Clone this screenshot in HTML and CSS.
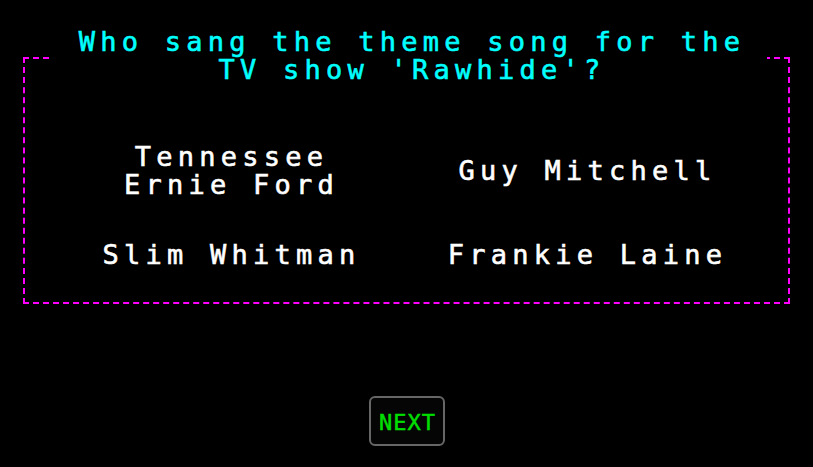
FILE: index.html
```html
<!DOCTYPE html>
<html lang="en">
<head>
<meta charset="utf-8">
<title>Quiz</title>
<link rel="stylesheet" href="styles.css">
</head>
<body>
<main class="page">
  <fieldset class="quiz">
    <legend class="question">Who sang the theme song for the TV show 'Rawhide'?</legend>
    <div class="answers">
      <div class="answer">Tennessee Ernie Ford</div>
      <div class="answer">Guy Mitchell</div>
      <div class="answer">Slim Whitman</div>
      <div class="answer">Frankie Laine</div>
    </div>
  </fieldset>
  <div class="actions">
    <button class="next" type="button">NEXT</button>
  </div>
</main>
</body>
</html>
```
FILE: styles.css
```css
html, body {
  margin: 0;
  padding: 0;
  background: #000;
}

body {
  font-family: "DejaVu Sans Mono", "Liberation Mono", monospace;
  color: #fff;
  width: 813px;
  height: 467px;
  overflow: hidden;
}

.page {
  padding-top: 28px;
}

.quiz {
  margin: 0 23px;
  padding: 42px 0 5px 6px;
  border: 2px dashed #ff00ff;
  min-width: 0;
}

.question {
  width: 715px;
  box-sizing: border-box;
  margin: 0 auto;
  padding: 0 20px 3px 25px;
  text-align: center;
  color: #00ffff;
  font-size: 27px;
  line-height: 28px;
  letter-spacing: 5.25px;
  -webkit-text-stroke: 0.6px #00ffff;
}

.answers {
  display: grid;
  grid-template-columns: 356px 356px;
  grid-template-rows: 84px 84px;
  justify-content: center;
  align-items: center;
}

.answer {
  padding: 0 28px;
  text-align: center;
  font-size: 27px;
  line-height: 28px;
  letter-spacing: 5.25px;
  color: #fff;
  -webkit-text-stroke: 0.6px #fff;
}

.actions {
  display: flex;
  justify-content: center;
  padding-top: 92px;
}

.next {
  width: 76px;
  height: 50px;
  box-sizing: border-box;
  background: #050505;
  border: 2px solid #666;
  border-radius: 6px;
  color: #00dd00;
  font-family: "DejaVu Sans Mono", "Liberation Mono", monospace;
  font-size: 22px;
  letter-spacing: 1px;
  -webkit-text-stroke: 0.5px #00dd00;
  padding: 2px 0 0 1px;
  margin-left: 1px;
}
```
